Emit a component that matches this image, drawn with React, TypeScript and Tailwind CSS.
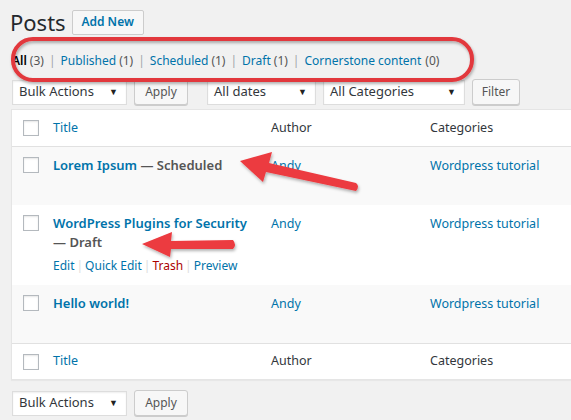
import React from "react";

const font = "font-['Noto_Sans','Open_Sans',sans-serif]";

const Check = () => (
  <span className="block w-[16px] h-[16px] border border-[#b4b9be] bg-white shadow-[inset_0_1px_2px_rgba(0,0,0,0.1)]" />
);

const Select = ({ label, w }: { label: string; w: string }) => (
  <div
    className={`${w} h-[25px] flex items-center justify-between bg-white border border-[#ddd] shadow-[inset_0_1px_2px_rgba(0,0,0,0.07)] pl-[6px] pr-[8px] text-[13px] text-[#32373c]`}
  >
    <span>{label}</span>
    <span className="text-[9px] text-[#222]">▼</span>
  </div>
);

const Btn = ({ children, w }: { children: React.ReactNode; w: string }) => (
  <button
    className={`${w} h-[26px] bg-[#f7f7f7] border border-[#ccc] rounded-[3px] shadow-[0_1px_0_#ccc] text-[12px] text-[#555] flex items-center justify-center`}
  >
    {children}
  </button>
);

const Sep = () => <span className="text-[#a0a5aa] px-[5px]">|</span>;

const App = () => {
  return (
    <div className={`relative w-[571px] h-[420px] overflow-hidden bg-[#f1f1f1] ${font}`}>
      <div className="flex items-center pl-[10px] pt-[9px] gap-[6px]">
        <h1 className="text-[22px] leading-[26px] text-[#23282d]">Posts</h1>
        <button className="h-[25px] w-[72px] bg-[#f7f7f7] border border-[#ccc] rounded-[2px] text-[12px] font-semibold text-[#0073aa]">
          Add New
        </button>
      </div>

      <div className="pl-[12px] mt-[17px] h-[18px] flex items-center text-[12px] text-[#555]">
        <span className="font-semibold text-black">All</span>
        <span className="ml-[3px]">(3)</span>
        <Sep />
        <span className="text-[#0073aa]">Published</span>
        <span className="ml-[3px]">(1)</span>
        <Sep />
        <span className="text-[#0073aa]">Scheduled</span>
        <span className="ml-[3px]">(1)</span>
        <Sep />
        <span className="text-[#0073aa]">Draft</span>
        <span className="ml-[3px]">(1)</span>
        <Sep />
        <span className="text-[#0073aa]">Cornerstone content</span>
        <span className="ml-[4px]">(0)</span>
      </div>

      <div className="flex items-center pl-[12px] mt-[9px] gap-[7px]">
        <Select label="Bulk Actions" w="w-[115px]" />
        <Btn w="w-[54px]">Apply</Btn>
        <div className="w-[5px]" />
        <Select label="All dates" w="w-[109px]" />
        <Select label="All Categories" w="w-[142px]" />
        <Btn w="w-[48px]">Filter</Btn>
      </div>

      <div className="ml-[11px] mt-[4px] w-[580px] bg-white border border-[#e5e5e5] shadow-[0_1px_1px_rgba(0,0,0,0.04)] text-[12.5px]">
        <div className="flex items-center h-[37px] border-b border-[#e1e1e1]">
          <div className="w-[41px] pl-[11px]">
            <Check />
          </div>
          <div className="w-[218px] text-[#0073aa]">Title</div>
          <div className="w-[159px] text-[#32373c]">Author</div>
          <div className="text-[#32373c]">Categories</div>
        </div>

        <div className="flex h-[58px] bg-[#f9f9f9] pt-[9px]">
          <div className="w-[41px] pl-[11px] pt-[1px]">
            <Check />
          </div>
          <div className="w-[218px] font-semibold text-[#0073aa] text-[13px] leading-[19px]">
            Lorem Ipsum <span className="text-[#555]">— Scheduled</span>
          </div>
          <div className="w-[159px] text-[#0073aa] leading-[19px]">Andy</div>
          <div className="text-[#0073aa] leading-[19px]">Wordpress tutorial</div>
        </div>

        <div className="flex h-[80px] bg-white pt-[9px]">
          <div className="w-[41px] pl-[11px] pt-[1px]">
            <Check />
          </div>
          <div className="w-[218px]">
            <div className="font-semibold text-[#0073aa] text-[13px] leading-[19px]">
              WordPress Plugins for Security
            </div>
            <div className="font-semibold text-[#555] text-[13px] leading-[19px]">— Draft</div>
            <div className="mt-[5px] text-[12px] leading-[18px] text-[#0073aa]">
              Edit<span className="text-[#ddd] px-[2px]">|</span>Quick Edit
              <span className="text-[#ddd] px-[2px]">|</span>
              <span className="text-[#a00]">Trash</span>
              <span className="text-[#ddd] px-[2px]">|</span>Preview
            </div>
          </div>
          <div className="w-[159px] text-[#0073aa] leading-[19px]">Andy</div>
          <div className="text-[#0073aa] leading-[19px]">Wordpress tutorial</div>
        </div>

        <div className="flex h-[58px] bg-[#f9f9f9] pt-[9px]">
          <div className="w-[41px] pl-[11px] pt-[1px]">
            <Check />
          </div>
          <div className="w-[218px] font-semibold text-[#0073aa] text-[13px] leading-[19px]">
            Hello world!
          </div>
          <div className="w-[159px] text-[#0073aa] leading-[19px]">Andy</div>
          <div className="text-[#0073aa] leading-[19px]">Wordpress tutorial</div>
        </div>

        <div className="flex items-center h-[36px] border-t border-[#e1e1e1]">
          <div className="w-[41px] pl-[11px]">
            <Check />
          </div>
          <div className="w-[218px] text-[#0073aa]">Title</div>
          <div className="w-[159px] text-[#32373c]">Author</div>
          <div className="text-[#32373c]">Categories</div>
        </div>
      </div>

      <div className="flex items-center pl-[12px] mt-[10px] gap-[7px]">
        <Select label="Bulk Actions" w="w-[115px]" />
        <Btn w="w-[54px]">Apply</Btn>
      </div>

      <svg className="absolute inset-0 pointer-events-none" width="571" height="420" viewBox="0 0 571 420">
        <defs>
          <filter id="sh" x="-10%" y="-20%" width="120%" height="150%">
            <feDropShadow dx="1" dy="2" stdDeviation="1.5" floodColor="#000" floodOpacity="0.3" />
          </filter>
        </defs>
        <rect x="13" y="39" width="459" height="41" rx="20" fill="none" stroke="#e2373c" strokeWidth="4" filter="url(#sh)" />
        <g fill="#ec3a3f" filter="url(#sh)">
          <path d="M240 161 L272 152 L269 163 L356 183 Q360 186 356 191 L266 172 L263 182 Z" />
          <path d="M142 244 L172 232 L171 241 L233 240 Q237 245 233 249 L171 249 L170 257 Z" />
        </g>
      </svg>
    </div>
  );
};

export default App;
